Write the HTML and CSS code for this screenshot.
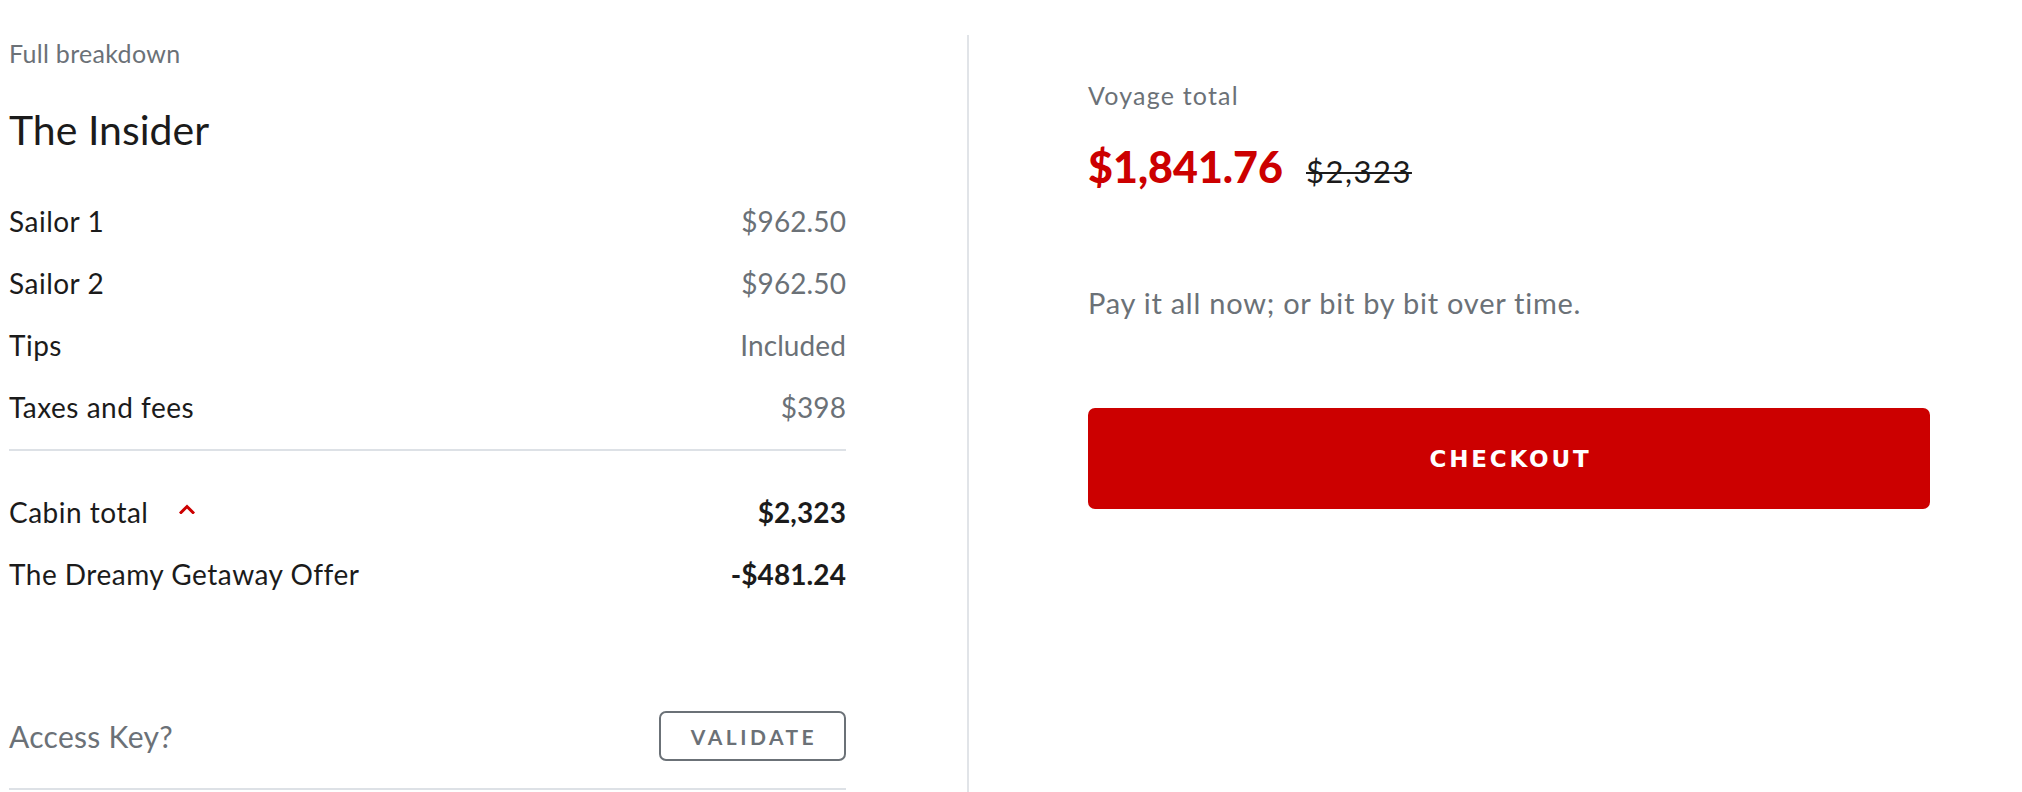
FILE: index.html
```html
<!DOCTYPE html>
<html lang="en">
<head>
<meta charset="utf-8">
<title>Voyage total</title>
<link rel="stylesheet" href="styles.css">
</head>
<body>
<div class="page">
  <section class="breakdown">
    <p class="eyebrow">Full breakdown</p>
    <h2 class="title">The Insider</h2>
    <div class="lines">
      <div class="row"><span class="label">Sailor 1</span><span class="muted">$962.50</span></div>
      <div class="row"><span class="label">Sailor 2</span><span class="muted">$962.50</span></div>
      <div class="row"><span class="label">Tips</span><span class="muted">Included</span></div>
      <div class="row"><span class="label">Taxes and fees</span><span class="muted">$398</span></div>
    </div>
    <div class="totals">
      <div class="row">
        <span class="label toggle">Cabin total
          <svg class="chev" viewBox="0 0 16 10" width="16" height="10" aria-hidden="true"><polyline points="2,8.5 8,2.5 14,8.5" fill="none" stroke="#cc0000" stroke-width="3" stroke-linecap="square"/></svg>
        </span>
        <span class="strong">$2,323</span>
      </div>
      <div class="row"><span class="label">The Dreamy Getaway Offer</span><span class="strong">-$481.24</span></div>
    </div>
    <div class="access">
      <span class="access-label">Access Key?</span>
      <button class="validate" type="button">VALIDATE</button>
    </div>
  </section>
  <section class="summary">
    <p class="eyebrow voyage">Voyage total</p>
    <div class="price-row">
      <span class="price">$1,841.76</span>
      <span class="was">$2,323</span>
    </div>
    <p class="note">Pay it all now; or bit by bit over time.</p>
    <button class="checkout" type="button">CHECKOUT</button>
  </section>
</div>
</body>
</html>
```
FILE: styles.css
```css
* { box-sizing: border-box; }
html, body { margin: 0; padding: 0; background: #ffffff; }
body {
  font-family: "Lato", "Liberation Sans", sans-serif;
  color: #1b1b1b;
  overflow: hidden;
}
.page {
  display: flex;
  align-items: flex-start;
  padding-left: 9px;
  padding-top: 35px;
}
.breakdown {
  flex: 0 0 960px;
  padding: 3px 121px 0 0;
  border-right: 2px solid #e1e4e8;
  min-height: 800px;
}
.eyebrow {
  margin: 0;
  font-size: 25px;
  line-height: 30px;
  letter-spacing: 0.3px;
  color: #6b7177;
}
.eyebrow.voyage {
  letter-spacing: 1.2px;
}
.title {
  margin: 38px 0 0;
  font-size: 41px;
  line-height: 48px;
  font-weight: 400;
  color: #1b1b1b;
}
.lines {
  margin-top: 36px;
  padding-bottom: 11px;
  border-bottom: 2px solid #dde1e6;
}
.row {
  display: flex;
  justify-content: space-between;
  align-items: baseline;
  font-size: 28px;
  line-height: 62px;
}
.label { letter-spacing: 0.5px; }
.muted { color: #6b7177; letter-spacing: 0.1px; }
.strong { font-weight: 700; color: #1b1b1b; letter-spacing: 0.1px; }
.totals { margin-top: 30px; }
.toggle { display: inline-flex; align-items: center; gap: 31px; }
.chev { display: block; margin-top: -6px; }
.access {
  margin-top: 106px;
  display: flex;
  justify-content: space-between;
  align-items: center;
  padding-bottom: 27px;
  border-bottom: 2px solid #dde1e6;
}
.access-label {
  font-size: 30px;
  line-height: 50px;
  letter-spacing: 0.3px;
  color: #6b7177;
}
.validate {
  width: 187px;
  height: 50px;
  border: 2px solid #6b7177;
  border-radius: 7px;
  background: #ffffff;
  color: #6b7177;
  font-family: "Lato", "Liberation Sans", sans-serif;
  font-weight: 700;
  font-size: 21px;
  letter-spacing: 3.5px;
  padding: 0 0 0 3px;
}
.summary {
  flex: 0 0 969px;
  padding: 45px 0 0 119px;
}
.price-row {
  margin-top: 31px;
  display: flex;
  align-items: baseline;
  gap: 23px;
  line-height: 52px;
}
.price {
  font-size: 43px;
  font-weight: 900;
  color: #cc0000;
}
.was {
  font-size: 31px;
  letter-spacing: 1.5px;
  color: #1b1b1b;
  text-decoration: line-through;
  text-decoration-thickness: 2px;
}
.note {
  margin: 88px 0 0;
  font-size: 29px;
  line-height: 36px;
  letter-spacing: 0.75px;
  color: #6b7177;
}
.checkout {
  margin-top: 87px;
  display: block;
  width: 842px;
  height: 101px;
  border: none;
  border-radius: 7px;
  background: #cc0000;
  color: #ffffff;
  font-family: "DejaVu Sans", "Liberation Sans", sans-serif;
  font-weight: 700;
  font-size: 23px;
  letter-spacing: 2.8px;
  padding: 0 0 0 3px;
}
```
